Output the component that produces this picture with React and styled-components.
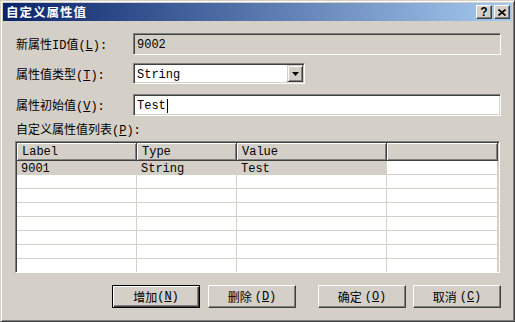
import styled, { createGlobalStyle } from "styled-components";

const GlobalStyle = createGlobalStyle`
  html, body {
    margin: 0;
    padding: 0;
    background: #d4d0c8;
  }
  * {
    box-sizing: border-box;
  }
`;

const FONT = `"Liberation Mono", "Noto Sans CJK SC", monospace`;

const Window = styled.div`
  width: 515px;
  height: 322px;
  background: #d4d0c8;
  border-top: 1px solid #d4d0c8;
  border-left: 1px solid #d4d0c8;
  border-right: 1px solid #404040;
  border-bottom: 1px solid #404040;
  box-shadow: inset 1px 1px #ffffff, inset -1px -1px #808080;
  padding: 2px;
  font-family: ${FONT};
  font-size: 12px;
  color: #000;
  display: flex;
  flex-direction: column;
`;

const TitleBar = styled.div`
  height: 18px;
  display: flex;
  align-items: center;
  padding: 0 2px 0 3px;
  background: linear-gradient(to right, #0a246a, #a6caf0);
`;

const Title = styled.div`
  flex: 1;
  color: #fff;
  font-family: "Noto Sans CJK SC", sans-serif;
  font-weight: bold;
  font-size: 12.5px;
  letter-spacing: 1px;
  line-height: 18px;
`;

const CaptionButton = styled.div`
  width: 16px;
  height: 14px;
  margin-left: ${(p) => p.$gap || 0}px;
  background: #d4d0c8;
  border-top: 1px solid #ffffff;
  border-left: 1px solid #ffffff;
  border-right: 1px solid #404040;
  border-bottom: 1px solid #404040;
  box-shadow: inset -1px -1px #808080;
  display: flex;
  align-items: center;
  justify-content: center;
  font-family: "Liberation Sans", sans-serif;
  font-weight: bold;
  font-size: 12px;
  line-height: 12px;
`;

const Body = styled.div`
  flex: 1;
  display: flex;
  flex-direction: column;
  padding: 12px 11px 0 12px;
`;

const FieldRow = styled.div`
  display: flex;
  align-items: center;
  height: ${(p) => p.$h}px;
  margin-top: ${(p) => p.$top || 0}px;
`;

const Label = styled.div`
  width: 118px;
  flex-shrink: 0;
  padding-left: 1px;
  white-space: nowrap;
`;

const Sunken = styled.div`
  height: 100%;
  border-top: 1px solid #808080;
  border-left: 1px solid #808080;
  border-right: 1px solid #ffffff;
  border-bottom: 1px solid #ffffff;
  box-shadow: inset 1px 1px #404040, inset -1px -1px #d4d0c8;
`;

const TextField = styled(Sunken)`
  width: ${(p) => p.$w}px;
  background: ${(p) => (p.$disabled ? "#d4d0c8" : "#ffffff")};
  padding: 1px 3px 0 3px;
  display: flex;
  align-items: center;
  white-space: nowrap;
`;

const Caret = styled.span`
  display: inline-block;
  width: 1px;
  height: 14px;
  background: #000;
  margin-left: 1px;
`;

const Combo = styled(Sunken)`
  width: ${(p) => p.$w}px;
  background: #fff;
  padding: 2px 1px 2px 3px;
  display: flex;
  align-items: center;
`;

const ComboText = styled.div`
  flex: 1;
  padding-top: 2px;
`;

const DropButton = styled.div`
  width: 16px;
  height: 17px;
  background: #d4d0c8;
  border-top: 1px solid #d4d0c8;
  border-left: 1px solid #d4d0c8;
  border-right: 1px solid #404040;
  border-bottom: 1px solid #404040;
  box-shadow: inset 1px 1px #ffffff, inset -1px -1px #808080;
  display: flex;
  align-items: center;
  justify-content: center;
`;

const SectionLabel = styled.div`
  margin-top: 6px;
  height: 18px;
  line-height: 18px;
  padding-left: 1px;
`;

const ListBox = styled(Sunken)`
  margin-top: 1px;
  width: 485px;
  height: 132px;
  flex: none;
  background: #fff;
  padding: 1px;
  overflow: hidden;
`;

const Grid = styled.div`
  display: grid;
  grid-template-columns: 120px 100px 150px 1fr;
`;

const HeaderCell = styled.div`
  height: 18px;
  line-height: 17px;
  padding: 1px 0 0 5px;
  background: #d4d0c8;
  border-right: 1px solid #404040;
  border-bottom: 1px solid #404040;
  box-shadow: inset 1px 1px #ffffff, inset -1px -1px #808080;
  white-space: nowrap;
`;

const Cell = styled.div`
  height: 14px;
  line-height: 14px;
  padding: 1px 0 0 4px;
  background: ${(p) => (p.$selected ? "#d4d0c8" : "#ffffff")};
  border-right: 1px solid #d4d0c8;
  border-bottom: 1px solid #d4d0c8;
  white-space: nowrap;
`;

const ButtonRow = styled.div`
  display: flex;
  justify-content: flex-end;
  margin-top: 12px;
`;

const Button = styled.div`
  width: 88px;
  height: 23px;
  margin-left: ${(p) => p.$gap}px;
  padding-top: 1px;
  background: #d4d0c8;
  display: flex;
  align-items: center;
  justify-content: center;
  white-space: nowrap;
  ${(p) =>
    p.$default
      ? `
    border: 1px solid #000;
    box-shadow: inset 1px 1px #ffffff, inset -1px -1px #404040, inset -2px -2px #808080;
  `
      : `
    border-top: 1px solid #ffffff;
    border-left: 1px solid #ffffff;
    border-right: 1px solid #404040;
    border-bottom: 1px solid #404040;
    box-shadow: inset -1px -1px #808080;
  `}
`;

const Mnemonic = styled.span`
  margin-left: ${(p) => p.$space || 0}px;
`;

const columns = ["Label", "Type", "Value", ""];
const rows = [["9001", "String", "Test", ""]];
const EMPTY_ROWS = 7;

const App = () => {
  const renderRows = () => {
    const all = [...rows];
    for (let i = 0; i < EMPTY_ROWS; i++) all.push(["", "", "", ""]);
    return all.map((row, r) =>
      row.map((value, c) => (
        <Cell key={r + "-" + c} $selected={r === 0 && c < 3}>
          {value}
        </Cell>
      ))
    );
  };

  return (
    <>
      <GlobalStyle />
      <Window>
        <TitleBar>
          <Title>自定义属性值</Title>
          <CaptionButton>?</CaptionButton>
          <CaptionButton $gap={2}>
            <svg width="8" height="7" viewBox="0 0 8 7">
              <path d="M0.5 0.5 L7.5 6.5 M7.5 0.5 L0.5 6.5" stroke="#000" strokeWidth="1.6" />
            </svg>
          </CaptionButton>
        </TitleBar>

        <Body>
          <FieldRow $h={22}>
            <Label>
              新属性ID值(<u>L</u>):
            </Label>
            <TextField $w={368} $disabled>
              9002
            </TextField>
          </FieldRow>

          <FieldRow $h={21} $top={8}>
            <Label>
              属性值类型(<u>T</u>):
            </Label>
            <Combo $w={172}>
              <ComboText>String</ComboText>
              <DropButton>
                <svg width="7" height="4" viewBox="0 0 7 4">
                  <path d="M0 0 H7 L3.5 4 Z" fill="#000" />
                </svg>
              </DropButton>
            </Combo>
          </FieldRow>

          <FieldRow $h={22} $top={10}>
            <Label>
              属性初始值(<u>V</u>):
            </Label>
            <TextField $w={368}>
              Test
              <Caret />
            </TextField>
          </FieldRow>

          <SectionLabel>
            自定义属性值列表(<u>P</u>):
          </SectionLabel>

          <ListBox>
            <Grid>
              {columns.map((col, i) => (
                <HeaderCell key={i}>{col}</HeaderCell>
              ))}
              {renderRows()}
            </Grid>
          </ListBox>

          <ButtonRow>
            <Button $default $gap={0}>
              增加<Mnemonic>(<u>N</u>)</Mnemonic>
            </Button>
            <Button $gap={8}>
              删除<Mnemonic $space={3}>(<u>D</u>)</Mnemonic>
            </Button>
            <Button $gap={22}>
              确定<Mnemonic $space={3}>(<u>O</u>)</Mnemonic>
            </Button>
            <Button $gap={7}>
              取消<Mnemonic $space={3}>(<u>C</u>)</Mnemonic>
            </Button>
          </ButtonRow>
        </Body>
      </Window>
    </>
  );
};

export default App;
